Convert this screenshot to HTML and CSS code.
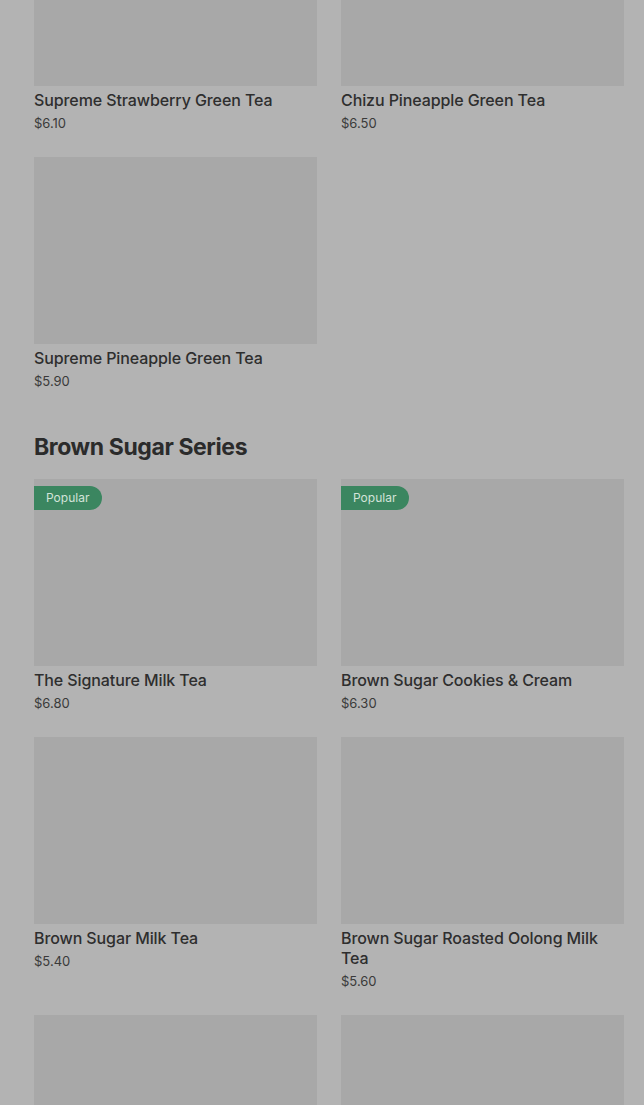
FILE: index.html
```html
<!DOCTYPE html>
<html lang="en">
<head>
    <meta charset="UTF-8">
    <meta name="viewport" content="width=device-width, initial-scale=1.0">
    <title>Menu</title>
    <link rel="stylesheet" href="styles.css">
</head>
<body>
    <div class="menu">
        <section class="category first">
            <div class="grid">
                <div class="item">
                    <div class="thumb"></div>
                    <div class="name">Supreme Strawberry Green Tea</div>
                    <div class="price">$6.10</div>
                </div>
                <div class="item">
                    <div class="thumb"></div>
                    <div class="name">Chizu Pineapple Green Tea</div>
                    <div class="price">$6.50</div>
                </div>
                <div class="item">
                    <div class="thumb"></div>
                    <div class="name">Supreme Pineapple Green Tea</div>
                    <div class="price">$5.90</div>
                </div>
            </div>
        </section>

        <section class="category">
            <h2>Brown Sugar Series</h2>
            <div class="grid">
                <div class="item">
                    <div class="thumb"><span class="badge">Popular</span></div>
                    <div class="name">The Signature Milk Tea</div>
                    <div class="price">$6.80</div>
                </div>
                <div class="item">
                    <div class="thumb"><span class="badge">Popular</span></div>
                    <div class="name">Brown Sugar Cookies &amp; Cream</div>
                    <div class="price">$6.30</div>
                </div>
                <div class="item">
                    <div class="thumb"></div>
                    <div class="name">Brown Sugar Milk Tea</div>
                    <div class="price">$5.40</div>
                </div>
                <div class="item">
                    <div class="thumb"></div>
                    <div class="name">Brown Sugar Roasted Oolong Milk Tea</div>
                    <div class="price">$5.60</div>
                </div>
                <div class="item">
                    <div class="thumb"></div>
                </div>
                <div class="item">
                    <div class="thumb"></div>
                </div>
            </div>
        </section>
    </div>
</body>
</html>
```

FILE: styles.css
```css
body {
    margin: 0;
    background-color: #b3b3b3;
    font-family: Inter, "Noto Sans", Arial, sans-serif;
    color: #2e2e2e;
    overflow: hidden;
}
.menu {
    padding: 0 20px 0 34px;
}
.category.first {
    margin-top: -101px;
}
.category h2 {
    margin: 42px 0 18px;
    font-size: 23px;
    line-height: 28px;
    font-weight: 700;
    letter-spacing: -0.4px;
    color: #2b2b2b;
}
.grid {
    display: grid;
    grid-template-columns: 1fr 1fr;
    column-gap: 24px;
    row-gap: 24px;
}
.thumb {
    position: relative;
    height: 187px;
    background-color: #a8a8a8;
}
.badge {
    position: absolute;
    top: 7px;
    left: 0;
    height: 24px;
    padding: 0 13px 0 12px;
    line-height: 24px;
    font-size: 12px;
    color: #d3e3d9;
    background-color: #3b8660;
    border-radius: 0 12px 12px 0;
}
.name {
    margin-top: 4px;
    font-size: 16px;
    line-height: 20px;
    font-weight: 500;
    letter-spacing: -0.1px;
    color: #2e2e2e;
}
.price {
    margin-top: 3px;
    font-size: 13px;
    line-height: 20px;
    color: #3a3a3a;
}
```
